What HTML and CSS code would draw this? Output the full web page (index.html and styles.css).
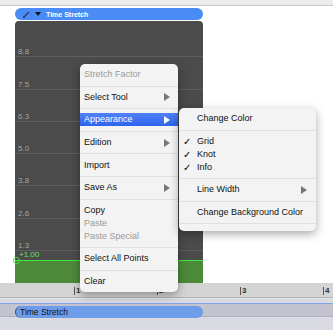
FILE: index.html
```html
<!DOCTYPE html>
<html lang="en">
<head>
    <meta charset="UTF-8">
    <title>Time Stretch</title>
    <link rel="stylesheet" href="styles.css">
</head>
<body>
    <div class="topbar"></div>

    <div class="editor">
        <div class="track-head">
            <svg class="pencil" width="7" height="7" viewBox="0 0 7 7">
                <path d="M1 6 L5.5 1.5" stroke="#33456a" stroke-width="1.6" stroke-linecap="round"/>
                <path d="M0.6 6.4 L1.4 5.6" stroke="#1c2a44" stroke-width="1.4"/>
            </svg>
            <span class="caret"></span>
            <span class="head-title">Time Stretch</span>
        </div>

        <div class="panel">
            <div class="grid-top"></div>
            <div class="grid-row"><span>8.8</span></div>
            <div class="grid-row"><span>7.5</span></div>
            <div class="grid-row"><span>6.3</span></div>
            <div class="grid-row"><span>5.0</span></div>
            <div class="grid-row"><span>3.8</span></div>
            <div class="grid-row"><span>2.6</span></div>
            <div class="grid-row"><span>1.3</span></div>
            <div class="value-row"><span>+1.00</span></div>
            <div class="curve-fill">
                <span class="knot"></span>
            </div>
        </div>
    </div>

    <div class="ruler">
        <div class="tick"><span>1</span></div>
        <div class="tick"><span>2</span></div>
        <div class="tick"><span>3</span></div>
        <div class="tick"><span>4</span></div>
    </div>

    <div class="lane">
        <div class="lane-track">
            <div class="clip">Time Stretch</div>
        </div>
    </div>

    <!-- context menu -->
    <div class="menu main-menu">
        <div class="group"><div class="item disabled">Stretch Factor</div></div>
        <div class="group"><div class="item">Select Tool <span class="arrow"></span></div></div>
        <div class="group"><div class="item active">Appearance <span class="arrow"></span></div></div>
        <div class="group"><div class="item">Edition <span class="arrow"></span></div></div>
        <div class="group"><div class="item">Import</div></div>
        <div class="group"><div class="item">Save As <span class="arrow"></span></div></div>
        <div class="group">
            <div class="item">Copy</div>
            <div class="item disabled">Paste</div>
            <div class="item disabled">Paste Special</div>
        </div>
        <div class="group"><div class="item">Select All Points</div></div>
        <div class="group last"><div class="item">Clear</div></div>
    </div>

    <div class="menu sub-menu">
        <div class="group"><div class="item">Change Color</div></div>
        <div class="group">
            <div class="item"><span class="check">&#10003;</span>Grid</div>
            <div class="item"><span class="check">&#10003;</span>Knot</div>
            <div class="item"><span class="check">&#10003;</span>Info</div>
        </div>
        <div class="group"><div class="item">Line Width <span class="arrow"></span></div></div>
        <div class="group"><div class="item">Change Background Color</div></div>
        <div class="group last empty"></div>
    </div>
</body>
</html>
```

FILE: styles.css
```css
body {
    margin: 0;
    width: 333px;
    height: 330px;
    overflow: hidden;
    background: #ffffff;
    font-family: "Liberation Sans", Arial, sans-serif;
    position: relative;
}

.topbar {
    height: 5px;
    background: #ebebeb;
    border-bottom: 1px solid #c8c8c8;
}

.editor {
    padding: 2px 0 0 15px;
    width: 188px;
}

.track-head {
    height: 12px;
    background: #4a8cf5;
    border-radius: 6px;
    display: flex;
    align-items: center;
    padding-left: 8px;
}

.pencil {
    margin-right: 5px;
}

.caret {
    width: 0;
    height: 0;
    border-left: 3px solid transparent;
    border-right: 3px solid transparent;
    border-top: 4px solid #111;
    margin-right: 5px;
}

.head-title {
    color: #fff;
    font-weight: bold;
    font-size: 7px;
}

.panel {
    margin-top: 1px;
    height: 262px;
    background: #4b4b4b;
    border-radius: 4px 4px 0 0;
    display: flex;
    flex-direction: column;
}

.grid-top {
    height: 4px;
}

.grid-row {
    height: 32.25px;
    box-sizing: border-box;
    border-bottom: 1px solid #5d5d5d;
    display: flex;
    align-items: flex-end;
    padding: 0 0 0 3px;
}

.grid-row span {
    font-size: 8px;
    line-height: 9px;
    color: #a3a3a3;
}

.value-row {
    height: 9.25px;
    padding-left: 4px;
    font-size: 8px;
    line-height: 8px;
    color: #5be85b;
}

.curve-fill {
    flex: 1;
    background: #4c8a3a;
    border-top: 1px solid #3fe83f;
    position: relative;
}

.knot {
    position: absolute;
    left: -2px;
    top: -4px;
    width: 5px;
    height: 5px;
    border: 1px solid #3fe83f;
    border-radius: 50%;
}

.ruler {
    height: 14px;
    background: #d4d4d4;
    border-bottom: 1px solid #b4b4b4;
    display: flex;
    align-items: flex-end;
    padding-left: 74px;
    overflow: hidden;
}

.tick {
    width: 83px;
    flex-shrink: 0;
    height: 8px;
    margin-bottom: 2px;
    border-left: 1px solid #555;
    font-size: 8px;
    font-weight: bold;
    line-height: 8px;
    color: #333;
    padding-left: 1px;
    box-sizing: border-box;
}

.lane {
    height: 32px;
    background: #dadae3;
    padding-top: 4px;
    box-sizing: border-box;
    border-top: 1px solid #e6e6e6;
}

.lane-track {
    height: 14px;
    background: #c2c3cf;
    border-top: 1px solid #7ea3e6;
    border-bottom: 1px solid #b0b0c0;
    padding-top: 2px;
    box-sizing: border-box;
}

.clip {
    margin-left: 15px;
    width: 188px;
    height: 12px;
    box-sizing: border-box;
    background: #6d9de9;
    border-left: 1px solid #2f4f86;
    border-radius: 6px;
    font-size: 8.5px;
    line-height: 12px;
    padding-left: 4px;
    color: #111;
}

/* menus */
.menu {
    position: absolute;
    background: #f3f3f3;
    border-radius: 5px;
    box-shadow: 0 3px 10px rgba(0, 0, 0, 0.35);
    font-size: 9px;
    color: #111;
}

.main-menu {
    left: 80px;
    top: 64px;
    width: 98px;
}

.sub-menu {
    left: 179px;
    top: 108px;
    width: 137px;
}

.group {
    padding: 4.3px 0;
    border-bottom: 1px solid #e0e0e0;
}

.group.last {
    border-bottom: none;
}

.group.empty {
    padding: 4px 0 3px;
}

.item {
    height: 13px;
    line-height: 13px;
    padding-left: 4px;
    display: flex;
    align-items: center;
    position: relative;
}

.sub-menu .item {
    padding-left: 18px;
}

.item.disabled {
    color: #9a9a9a;
}

.item.active {
    background: linear-gradient(#4f82f6, #2e63ec);
    color: #fff;
}

.arrow {
    position: absolute;
    right: 8px;
    top: 2.5px;
    width: 0;
    height: 0;
    border-top: 4px solid transparent;
    border-bottom: 4px solid transparent;
    border-left: 6px solid #777;
}

.sub-menu .arrow {
    right: 9px;
}

.item.active .arrow {
    border-left-color: #fff;
}

.check {
    position: absolute;
    left: 4px;
    font-family: "DejaVu Sans", sans-serif;
    font-weight: bold;
    font-size: 10px;
    color: #000;
}
```
